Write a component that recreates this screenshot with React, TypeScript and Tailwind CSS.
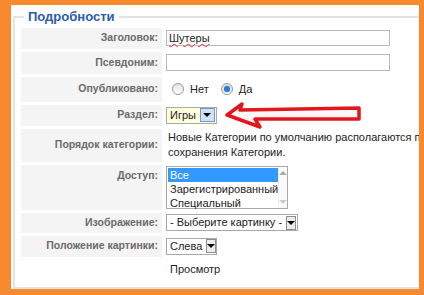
import React from "react";

const font = { fontFamily: '"Liberation Sans", Arial, sans-serif' };

function DropButton({ blue }: { blue?: boolean }) {
  return (
    <span
      className={
        "flex items-center justify-center w-[16px] h-[14px] border " +
        (blue ? "border-[#6e9cc9] bg-[#cfe1f3]" : "border-[#8d8d8d] bg-[#ececec]")
      }
    >
      <span className="w-0 h-0 border-l-[4px] border-r-[4px] border-t-[4px] border-l-transparent border-r-transparent border-t-black" />
    </span>
  );
}

function Select({ text, width, yellow, blue }: { text: string; width: string; yellow?: boolean; blue?: boolean }) {
  return (
    <div className={"flex items-center h-[17px] border border-[#a9a9a9] pl-[3px] pr-[1px] gap-[4px] " + width + (yellow ? " bg-[#ffffdc]" : " bg-white")}>
      <span className="flex-1 text-[11px] text-[#222] whitespace-nowrap">{text}</span>
      <DropButton blue={blue} />
    </div>
  );
}

function Radio({ checked }: { checked?: boolean }) {
  return (
    <span className="flex items-center justify-center w-[12px] h-[12px] rounded-full border border-[#9a9a9a] bg-gradient-to-b from-[#e4e4e4] to-white">
      {checked && <span className="w-[6px] h-[6px] rounded-full bg-[#2b7bd0] shadow-[0_0_2px_#5aa0e6]" />}
    </span>
  );
}

const rows: { label: string; h: string; top?: boolean; gray?: boolean; content: React.ReactNode }[] = [
  {
    label: "Заголовок:",
    h: "h-[21px]",
    content: (
      <div className="w-[224px] h-[16px] border border-[#b9b9b9] bg-white flex items-center pl-[2px]">
        <span className="text-[11px] text-[#222] underline decoration-wavy decoration-red-500 decoration-1">Шутеры</span>
      </div>
    ),
  },
  {
    label: "Псевдоним:",
    h: "h-[22px]",
    content: <div className="w-[224px] h-[17px] border border-[#b9b9b9] bg-white" />,
  },
  {
    label: "Опубликовано:",
    h: "h-[25px]",
    content: (
      <div className="flex items-center text-[11px] text-[#222] pl-[6px]">
        <Radio />
        <span className="ml-[6px]">Нет</span>
        <span className="ml-[12px]"><Radio checked /></span>
        <span className="ml-[6px]">Да</span>
      </div>
    ),
  },
  {
    label: "Раздел:",
    h: "h-[21px]",
    content: <Select text="Игры" width="w-[51px]" yellow blue />,
  },
  {
    label: "Порядок категории:",
    h: "h-[33px]",
    content: (
      <div className="text-[11px] leading-[15px] text-[#222] pl-[2px] whitespace-nowrap">
        Новые Категории по умолчанию располагаются после
        <br />
        сохранения Категории.
      </div>
    ),
  },
  {
    label: "Доступ:",
    h: "h-[45px]",
    top: true,
    content: (
      <div className="flex w-[122px] h-[43px] border border-[#a9a9a9] bg-white text-[11px] leading-[14px] text-[#222]">
        <div className="flex-1 pt-[1px] pl-[1px]">
          <div className="bg-[#3399ff] text-white pl-[2px]">Все</div>
          <div className="pl-[2px]">Зарегистрированный</div>
          <div className="pl-[2px]">Специальный</div>
        </div>
        <div className="w-[15px] flex flex-col justify-between items-center py-[4px] bg-[#fafafa] border-l border-[#eee]">
          <span className="w-0 h-0 border-l-[4px] border-r-[4px] border-b-[4px] border-l-transparent border-r-transparent border-b-[#aaa]" />
          <span className="w-0 h-0 border-l-[4px] border-r-[4px] border-t-[4px] border-l-transparent border-r-transparent border-t-[#ccc]" />
        </div>
      </div>
    ),
  },
  {
    label: "Изображение:",
    h: "h-[20px]",
    content: <Select text="- Выберите картинку -" width="w-[132px]" />,
  },
  {
    label: "Положение картинки:",
    h: "h-[21px]",
    content: <Select text="Слева" width="w-[51px]" />,
  },
  {
    label: "",
    h: "h-[20px]",
    gray: false,
    content: <span className="text-[11px] text-[#222] pl-[4px]">Просмотр</span>,
  },
];

export default function App() {
  return (
    <div className="w-[424px] h-[295px] bg-[#f7892e] pl-[11px] pt-[5px] pr-[5px] pb-[6px] overflow-hidden" style={font}>
      <div className="relative bg-white h-full overflow-hidden pt-[2px] pl-[2px]">
        <fieldset className="w-[430px] h-[282px] border-2 border-r-0 border-[#e3e3e3] pl-[6px] pt-[1px]">
          <legend className="ml-[3px] px-[4px] text-[13px] font-bold text-[#2a5caa]">Подробности</legend>
          <div className="flex flex-col gap-[3px]">
            {rows.map((r, i) => (
              <div key={i} className={"flex gap-[4px] " + r.h}>
                <div
                  className={
                    "w-[141px] shrink-0 flex justify-end pr-[4px] text-[10.5px] font-bold text-[#6a6a6a] " +
                    (r.top ? "items-start pt-[3px] " : "items-center ") +
                    (r.gray === false ? "" : "bg-[#f4f4f4]")
                  }
                >
                  {r.label}
                </div>
                <div className="flex items-center">{r.content}</div>
              </div>
            ))}
          </div>
        </fieldset>
        <svg className="absolute left-[213px] top-[96px]" width="140" height="30" viewBox="0 0 140 30">
          <path
            d="M3 14 L18 3 L16 9 L135 7 L135 18 L31 18 L36 26 Z"
            fill="#fff6f6"
            stroke="#e3161d"
            strokeWidth="3.5"
            strokeLinejoin="round"
          />
        </svg>
      </div>
    </div>
  );
}
